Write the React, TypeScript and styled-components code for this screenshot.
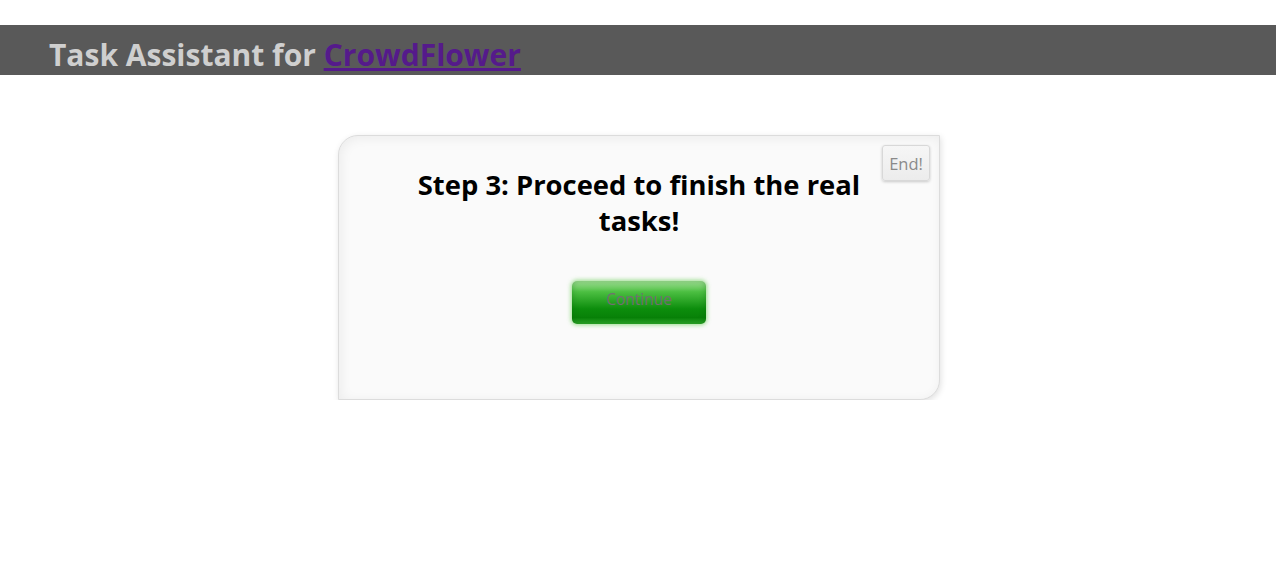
import React from "react";
import styled, { createGlobalStyle } from "styled-components";

const Global = createGlobalStyle`
  html, body { margin: 0; padding: 0; background: #ffffff; }
  body { font-family: "Open Sans", "Noto Sans", sans-serif; }
`;

const Header = styled.header`
  margin-top: 25px;
  height: 50px;
  background: #595959;
  overflow: hidden;
`;

const Title = styled.h1`
  margin: 0;
  padding-left: 49px;
  font-size: 30px;
  line-height: 60px;
  font-weight: 700;
  color: #cfcfcf;
  white-space: nowrap;
  a { color: #551a8b; text-decoration: underline; }
`;

const Main = styled.main`
  display: flex;
  justify-content: center;
  padding-top: 60px;
  padding-left: 2px;
`;

const Card = styled.section`
  position: relative;
  box-sizing: border-box;
  width: 602px;
  height: 265px;
  background: #fafafa;
  border: 1px solid #dcdcdc;
  border-radius: 20px 0 20px 0;
  box-shadow: inset 2px 2px 12px rgba(0,0,0,0.06), 1px 2px 6px rgba(0,0,0,0.12);
  display: flex;
  flex-direction: column;
  align-items: center;
  padding-top: 31px;
`;

const Heading = styled.h2`
  margin: 0;
  width: 480px;
  text-align: center;
  font-size: 27.4px;
  line-height: 36px;
  font-weight: 700;
  color: #000;
`;

const EndButton = styled.button`
  position: absolute;
  top: 9px;
  right: 9px;
  width: 48px;
  height: 36px;
  padding: 0;
  border: 1px solid #d8d8d8;
  border-radius: 3px;
  background: linear-gradient(#f6f6f6, #ececec);
  box-shadow: 0 1px 3px rgba(0,0,0,0.2);
  color: #8a8a8a;
  font-family: "Open Sans", sans-serif;
  font-size: 16.5px;
`;

const ContinueButton = styled.button`
  margin-top: 42px;
  width: 134px;
  height: 43px;
  padding: 0 0 7px 0;
  border: none;
  border-radius: 5px;
  background: linear-gradient(#a6e39a 0%, #4cbf42 25%, #0c8d0c 65%, #088108 85%, #2ea82a 100%);
  box-shadow: 0 0 4px 1px rgba(110, 210, 90, 0.7), inset 0 0 6px rgba(0,90,0,0.35);
  color: #707070;
  font-family: "Open Sans", sans-serif;
  font-size: 15.5px;
  font-weight: 400;
`;

export default function App() {
  return (
    <>
      <Global />
      <Header>
        <Title>
          Task Assistant for <a href="#">CrowdFlower</a>
        </Title>
      </Header>
      <Main>
        <Card>
          <EndButton>End!</EndButton>
          <Heading>Step 3: Proceed to finish the real tasks!</Heading>
          <ContinueButton>Continue</ContinueButton>
        </Card>
      </Main>
    </>
  );
}
